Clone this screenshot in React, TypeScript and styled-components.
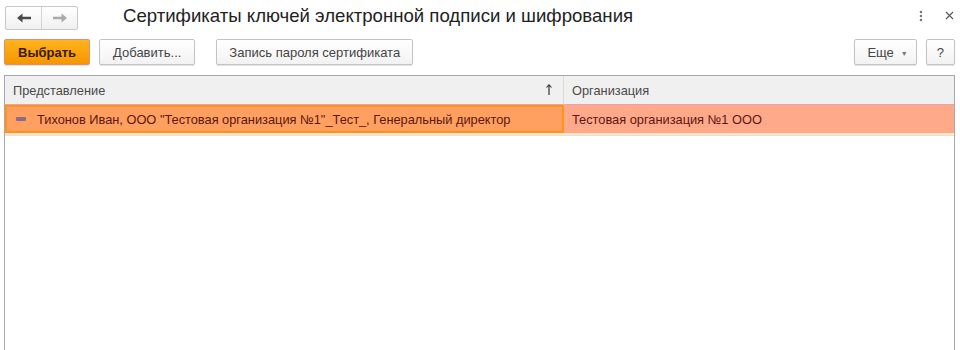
import React from 'react';
import styled, { createGlobalStyle } from 'styled-components';

const GlobalStyle = createGlobalStyle`
  html, body {
    margin: 0;
    padding: 0;
    background: #fff;
    font-family: Arial, "Liberation Sans", sans-serif;
    overflow: hidden;
  }
`;

const Page = styled.div`
  width: 960px;
  height: 350px;
  display: flex;
  flex-direction: column;
  box-sizing: border-box;
  padding: 5px 5px 0 4px;
`;

const TitleBar = styled.div`
  display: flex;
  align-items: center;
  height: 25px;
`;

const NavGroup = styled.div`
  display: flex;
  margin-left: 1px;
  height: 24px;
  border: 1px solid #c8c8c8;
  border-radius: 2px;
  background: linear-gradient(#ffffff, #f0f0f0);
  box-sizing: border-box;
`;

const NavButton = styled.div<{ $first?: boolean }>`
  width: 35px;
  display: flex;
  align-items: center;
  justify-content: center;
  border-right: ${({ $first }) => ($first ? '1px solid #d4d4d4' : 'none')};
`;

const Title = styled.h1`
  margin: 0 0 0 45px;
  font-size: 18.6px;
  font-weight: normal;
  color: #222;
  flex: 1;
  line-height: 24px;
  position: relative;
  top: -2px;
`;

const WindowTools = styled.div`
  display: flex;
  align-items: center;
  gap: 22px;
  margin-right: 1px;
  color: #666;
  position: relative;
  top: -2px;
`;

const Toolbar = styled.div`
  display: flex;
  align-items: center;
  margin-top: 9px;
  height: 26px;
`;

const Button = styled.div<{ $primary?: boolean; $ml?: number; $pad?: string }>`
  height: 26px;
  box-sizing: border-box;
  padding: ${({ $pad }) => $pad ?? '0 13px'};
  margin-left: ${({ $ml }) => $ml ?? 0}px;
  display: flex;
  align-items: center;
  font-size: 13px;
  border-radius: 2px;
  color: ${({ $primary }) => ($primary ? '#3a1a00' : '#444')};
  font-weight: ${({ $primary }) => ($primary ? 'bold' : 'normal')};
  border: 1px solid ${({ $primary }) => ($primary ? '#e0906a' : '#c3c3c3')};
  background: ${({ $primary }) =>
    $primary ? 'linear-gradient(#ffb41e, #f59600)' : 'linear-gradient(#ffffff, #f2f2f2)'};
  box-shadow: 0 1px 1px rgba(0, 0, 0, 0.12);
`;

const Spacer = styled.div`
  flex: 1;
`;

const Caret = styled.span`
  margin-left: 7px;
  font-size: 7px;
  color: #777;
  position: relative;
  top: 1px;
`;

const Table = styled.div`
  margin-top: 10px;
  border: 1px solid #a8a8a8;
  border-bottom: none;
  flex: 1;
  display: flex;
  flex-direction: column;
`;

const Cols = styled.div`
  display: grid;
  grid-template-columns: 559px 1fr;
`;

const HeadCell = styled.div<{ $last?: boolean }>`
  height: 28px;
  display: flex;
  align-items: center;
  justify-content: space-between;
  padding: 0 11px 0 8px;
  background: #f0f0f0;
  color: #4a4a4a;
  font-size: 12.8px;
  border-right: ${({ $last }) => ($last ? 'none' : '1px solid #dcdcdc')};
  border-bottom: 1px solid #e6a4a4;
`;

const Row = styled(Cols)`
  height: 28px;
  border-bottom: 2px solid #ffe6c8;
`;

const Cell = styled.div<{ $current?: boolean }>`
  display: flex;
  align-items: center;
  font-size: 12.8px;
  color: #5e1610;
  padding: 0 8px;
  box-sizing: border-box;
  background: ${({ $current }) => ($current ? '#ffa060' : '#ffa98b')};
  border: ${({ $current }) => ($current ? '2px solid #ff9419' : 'none')};
  white-space: nowrap;
`;

const RowMark = styled.span`
  width: 10px;
  height: 4px;
  border-radius: 1px;
  background: #8c6a8e;
  margin: 0 11px 0 1px;
`;

const Divider = styled.div`
  height: 1px;
  background: #e2e2e2;
`;

const Arrow: React.FC<{ dir: 'left' | 'right'; color: string }> = ({ dir, color }) => (
  <svg width="14" height="10" viewBox="0 0 14 10">
    <g transform={dir === 'right' ? 'scale(-1,1) translate(-14,0)' : undefined} fill={color}>
      <path d="M0 5 L5.5 0.5 L5.5 3.8 L14 3.8 L14 6.2 L5.5 6.2 L5.5 9.5 Z" />
    </g>
  </svg>
);

export default function App() {
  return (
    <Page>
      <GlobalStyle />
      <TitleBar>
        <NavGroup>
          <NavButton $first>
            <Arrow dir="left" color="#4a4a4a" />
          </NavButton>
          <NavButton>
            <Arrow dir="right" color="#a8a8a8" />
          </NavButton>
        </NavGroup>
        <Title>Сертификаты ключей электронной подписи и шифрования</Title>
        <WindowTools>
          <svg width="4" height="12" viewBox="0 0 4 12">
            <circle cx="2" cy="2" r="1.3" fill="#777" />
            <circle cx="2" cy="6" r="1.3" fill="#777" />
            <circle cx="2" cy="10" r="1.3" fill="#777" />
          </svg>
          <svg width="9" height="9" viewBox="0 0 9 9">
            <path d="M1 1 L8 8 M8 1 L1 8" stroke="#555" strokeWidth="1.1" />
          </svg>
        </WindowTools>
      </TitleBar>
      <Toolbar>
        <Button $primary>Выбрать</Button>
        <Button $ml={9}>Добавить...</Button>
        <Button $ml={21} $pad="0 12px">
          Запись пароля сертификата
        </Button>
        <Spacer />
        <Button $pad="0 8px 0 12px">
          Еще<Caret>▼</Caret>
        </Button>
        <Button $ml={9} $pad="0 10px">
          ?
        </Button>
      </Toolbar>
      <Table>
        <Cols>
          <HeadCell>
            <span>Представление</span>
            <svg width="6" height="12" viewBox="0 0 6 12">
              <path d="M3 1 L3 11" stroke="#333" strokeWidth="1.2" />
              <path d="M0.5 3.5 L3 0.8 L5.5 3.5" stroke="#333" strokeWidth="1.1" fill="none" />
            </svg>
          </HeadCell>
          <HeadCell $last>
            <span>Организация</span>
          </HeadCell>
        </Cols>
        <Row>
          <Cell $current>
            <RowMark />
            Тихонов Иван, ООО "Тестовая организация №1"_Тест_, Генеральный директор
          </Cell>
          <Cell>Тестовая организация №1 ООО</Cell>
        </Row>
        <Divider />
      </Table>
    </Page>
  );
}
